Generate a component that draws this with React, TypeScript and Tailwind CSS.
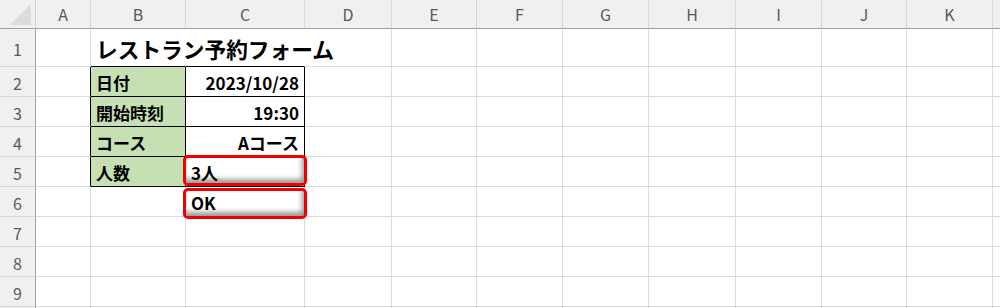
import React from 'react';

const COLS = ['A', 'B', 'C', 'D', 'E', 'F', 'G', 'H', 'I', 'J', 'K', ''];
const ROWS = [1, 2, 3, 4, 5, 6, 7, 8, 9];

type Cell = { text?: string; align?: 'left' | 'right'; green?: boolean; title?: boolean };

const cells: Record<string, Cell> = {
  B1: { text: 'レストラン予約フォーム', title: true },
  B2: { text: '日付', green: true },
  C2: { text: '2023/10/28', align: 'right' },
  B3: { text: '開始時刻', green: true },
  C3: { text: '19:30', align: 'right' },
  B4: { text: 'コース', green: true },
  C4: { text: 'Aコース', align: 'right' },
  B5: { text: '人数', green: true },
  C5: { text: '3人' },
  C6: { text: 'OK' },
};

// cells inside the black-bordered table
const inTable = (col: string, row: number) => (col === 'B' || col === 'C') && row >= 2 && row <= 5;

function borderClasses(col: string, row: number) {
  // right border
  let right = 'border-r-[#dadada]';
  if (row === 1 && (col === 'B' || col === 'C')) right = 'border-r-transparent';
  if (inTable(col, row)) right = 'border-r-black';
  if (col === 'A' && row >= 2 && row <= 5) right = 'border-r-black';

  // bottom border
  let bottom = 'border-b-[#dadada]';
  if (inTable(col, row)) bottom = 'border-b-black';
  if (row === 1 && (col === 'B' || col === 'C')) bottom = 'border-b-black';

  return `${right} ${bottom}`;
}

export default function App() {
  return (
    <div className="relative w-[1000px] h-[308px] overflow-hidden bg-white font-['Noto_Sans_CJK_JP','Liberation_Sans',sans-serif]">
      <div className="grid grid-cols-[36px_55px_95px_119px_87px_85px_86px_86px_87px_86px_85px_86px_1fr] grid-rows-[29px_38px_repeat(9,30px)]">
        {/* corner */}
        <div className="bg-[#f0f0f0] border-r border-b border-r-[#d0d0d0] border-b-[#a0a0a0] flex items-end justify-end p-[3px]">
          <svg width="22" height="21" viewBox="0 0 22 21">
            <polygon points="0,21 21,21 21,0" fill="#dcdcdc" />
          </svg>
        </div>
        {COLS.map((c, i) => (
          <div
            key={'h' + i}
            className="bg-[#f0f0f0] border-r border-b border-r-[#d6d6d6] border-b-[#a0a0a0] flex items-center justify-center text-[16px] leading-none text-[#5a5a5a]"
          >
            {c}
          </div>
        ))}

        {[...ROWS, 0].map((r) => (
          <React.Fragment key={r}>
            <div className="bg-[#f0f0f0] border-r border-b border-r-[#a0a0a0] border-b-[#d6d6d6] flex items-center justify-center pt-[3px] text-[16px] leading-none text-[#5a5a5a]">
              {r > 0 ? r : ''}
            </div>
            {COLS.map((c, i) => {
              const cell = cells[c + r];
              return (
                <div
                  key={c + r + i}
                  className={`border-r border-b ${borderClasses(c, r)} ${cell?.green ? 'bg-[#c6e0b4]' : ''} flex items-center px-[5px] pt-[2px] whitespace-nowrap ${cell?.align === 'right' ? 'justify-end' : 'justify-start'}`}
                >
                  {cell?.text && (
                    <span
                      className={`font-bold leading-none text-black ${cell.title ? 'text-[21.7px]' : 'text-[17px]'}`}
                    >
                      {cell.text}
                    </span>
                  )}
                </div>
              );
            })}
          </React.Fragment>
        ))}
      </div>

      {/* red highlight frames */}
      <div className="absolute left-[183px] top-[155px] w-[124px] h-[31px] rounded-[5px] border-[3px] border-[#f00000] shadow-[inset_-2px_-4px_5px_rgba(0,0,0,0.4)]" />
      <div className="absolute left-[183px] top-[188px] w-[124px] h-[31px] rounded-[5px] border-[3px] border-[#f00000] shadow-[inset_-2px_-4px_5px_rgba(0,0,0,0.4)]" />
    </div>
  );
}
